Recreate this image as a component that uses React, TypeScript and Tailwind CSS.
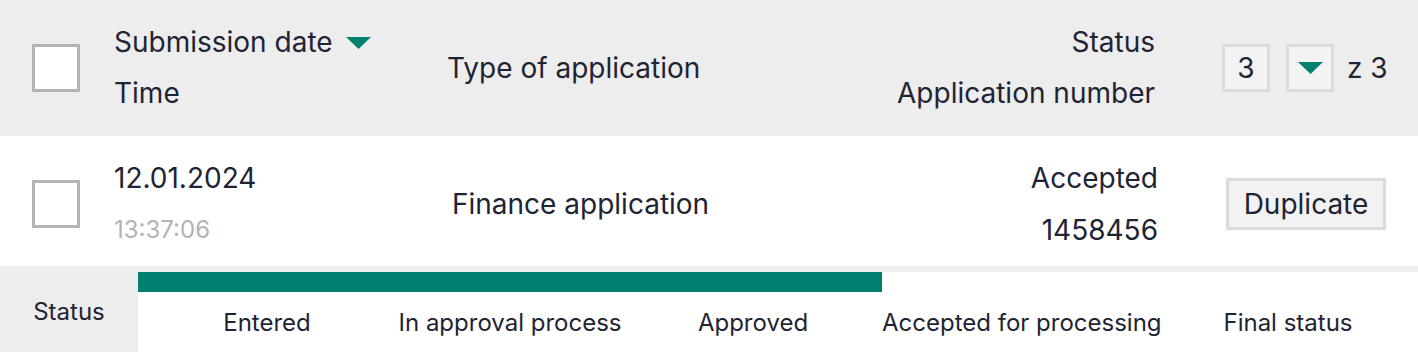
import React from 'react';

const font = { fontFamily: 'Inter, "Noto Sans", sans-serif' };

function Caret() {
  return (
    <svg width="25" height="12" viewBox="0 0 25 12" className="shrink-0">
      <path d="M0 0 H25 L12.5 12 Z" fill="#02806f" />
    </svg>
  );
}

const steps = [
  { label: 'Entered', w: 'w-[258px]' },
  { label: 'In approval process', w: 'w-[228px]' },
  { label: 'Approved', w: 'w-[258px]' },
  { label: 'Accepted for processing', w: 'w-[276px]' },
  { label: 'Final status', w: 'w-[260px]' },
];

export default function App() {
  return (
    <div className="w-[1418px] h-[352px] overflow-hidden bg-white text-[#1e2433]" style={font}>
      {/* header */}
      <div className="flex items-center h-[136px] bg-[#ededed] pl-[32px] pr-[32px] text-[28px]">
        <div className="w-12 h-12 shrink-0 border-[3px] border-[#b4b4b4] bg-white" />
        <div className="ml-[34px] w-[333px] flex flex-col leading-[51px]">
          <div className="flex items-center gap-[13px]">
            <span>Submission date</span>
            <Caret />
          </div>
          <span>Time</span>
        </div>
        <div className="flex-1 leading-[51px]">Type of application</div>
        <div className="flex flex-col items-end leading-[51px] mr-[67px]">
          <span>Status</span>
          <span>Application number</span>
        </div>
        <div className="w-[164px] shrink-0 flex items-center whitespace-nowrap">
          <div className="w-12 h-12 shrink-0 border-[3px] border-[#dcdcdc] bg-[#f3f3f3] flex items-center justify-center">3</div>
          <div className="ml-4 w-12 h-12 shrink-0 border-[3px] border-[#dcdcdc] bg-[#f3f3f3] flex items-center justify-center">
            <Caret />
          </div>
          <span className="ml-[13px]">z 3</span>
        </div>
      </div>

      {/* row */}
      <div className="flex items-center h-[130px] pt-[6px] box-border pl-[32px] pr-[32px] text-[28px]">
        <div className="w-12 h-12 shrink-0 border-[3px] border-[#b4b4b4] bg-white" />
        <div className="ml-[34px] w-[338px] flex flex-col leading-[52px]">
          <span>12.01.2024</span>
          <span className="text-[24px] text-[#b3b3b3]">13:37:06</span>
        </div>
        <div className="flex-1">Finance application</div>
        <div className="flex flex-col items-end leading-[52px] mr-[64px]">
          <span>Accepted</span>
          <span>1458456</span>
        </div>
        <div className="w-[164px] shrink-0 flex justify-end">
          <button className="w-[160px] h-[52px] border-[3px] border-[#dcdcdc] bg-[#f2f2f2] text-[28px]">
            Duplicate
          </button>
        </div>
      </div>

      {/* status timeline */}
      <div className="h-[6px] bg-[#ededed]" />
      <div className="flex text-[24px]">
        <div className="w-[138px] h-[80px] shrink-0 bg-[#ededed] flex items-center justify-center">Status</div>
        <div className="flex-1 flex flex-col">
          <div className="w-[744px] h-[20px] bg-[#02806f]" />
          <div className="flex items-center h-[60px] pt-[2px] whitespace-nowrap">
            {steps.map((s) => (
              <div key={s.label} className={`${s.w} text-center shrink-0`}>
                {s.label}
              </div>
            ))}
          </div>
        </div>
      </div>
    </div>
  );
}
